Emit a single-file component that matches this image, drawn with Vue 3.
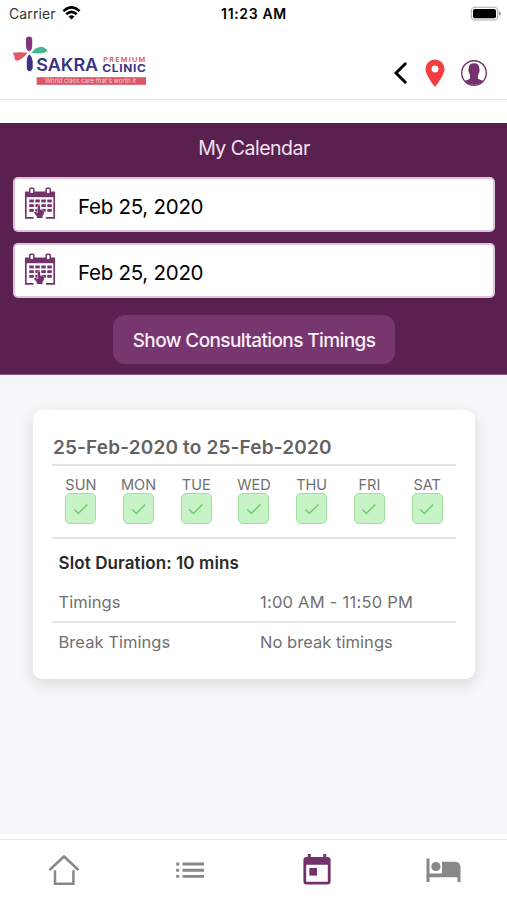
<script setup>
import { ref } from 'vue'

const dates = ref(['Feb 25, 2020', 'Feb 25, 2020'])
const days = ['SUN', 'MON', 'TUE', 'WED', 'THU', 'FRI', 'SAT']
const cells = [0, 1, 2, 3].flatMap((c) => [0, 1, 2].map((r) => ({ x: 5.3 + c * 6, y: 12.5 + r * 4.7 })))
</script>

<template>
  <div class="screen">
    <div class="status">
      <div class="carrier">
        <span>Carrier</span>
        <svg width="19" height="14" viewBox="0 0 18 14">
          <g fill="none" stroke="#000" stroke-width="2.6">
            <path d="M.9 5.1Q9-2.5 17.1 5.1" />
            <path d="M3.8 8.2Q9 3.4 14.2 8.2" />
          </g>
          <path d="M6.1 10.5Q9 8 11.9 10.5L9 13.5Z" />
        </svg>
      </div>
      <div class="clock">11:23 AM</div>
      <svg class="battery" width="32" height="16" viewBox="0 0 32 16">
        <rect x="1.2" y="1.2" width="26.6" height="12.8" rx="3.8" fill="#fff" stroke="#aaa" stroke-width="1.1" />
        <rect x="3" y="3" width="23" height="9.2" rx="2" />
        <path d="M29 5.4Q31 6 31 7.6T29 9.8Z" fill="#999" />
      </svg>
    </div>

    <header class="header">
      <svg class="logo" width="140" height="54" viewBox="10 34 140 54">
        <path d="M29 36.500Q32 36.500 32.200 39V47Q32 50 29.500 51.500Q26 50.500 26 46V39Q26.100 36.500 29 36.500Z" fill="#80377f" />
        <path d="M31.500 52.800Q35 47.500 41 46.800Q45 47 47.800 51Q44 53.500 38 53.600Q34 53.500 31.500 52.800Z" fill="#45b596" />
        <path d="M12.800 52.800Q20 51.800 27.500 52.800Q25.500 56 21.500 58.800Q17 61.800 15.100 60Q14.600 56 12.800 52.800Z" fill="#df5968" />
        <path d="M29.400 54.200Q32.600 57.200 32.700 61V67.500Q32.500 70.800 29.700 71.200Q27 71 26.800 68V60Q27.200 56 29.400 54.200Z" fill="#3b3484" />
        <text class="logo-name" x="36.200" y="71" textLength="62" lengthAdjust="spacingAndGlyphs">SAKRA</text>
        <text class="logo-tier" x="103.300" y="61.800" textLength="43.200" lengthAdjust="spacingAndGlyphs">PREMIUM</text>
        <text class="logo-kind" x="102.300" y="71.500" textLength="44.300" lengthAdjust="spacingAndGlyphs">CLINIC</text>
        <rect x="36.700" y="77.200" width="109.300" height="7.600" fill="#d95867" />
        <text class="logo-tag" x="45" y="83" textLength="91" lengthAdjust="spacingAndGlyphs">World class care that's worth it</text>
      </svg>
      <div class="actions">
        <svg width="16" height="24" viewBox="0 0 16 24">
          <path d="M13.300 2.800 4 12 13.300 21.200" fill="none" stroke="#000" stroke-width="2.900" stroke-linecap="round" />
        </svg>
        <svg width="20" height="28" viewBox="0 0 20 28">
          <path fill="#f23e40" fill-rule="evenodd" d="M10 .5A9.500 9.500 0 0 0 .5 10C.5 16.500 10 27.800 10 27.800S19.500 16.500 19.500 10A9.500 9.500 0 0 0 10 .5ZM10 6.600A3.400 3.400 0 1 1 10 13.400A3.400 3.400 0 1 1 10 6.600Z" />
        </svg>
        <svg width="28" height="28" viewBox="0 0 28 28">
          <circle cx="14" cy="14" r="12.300" fill="#fff" stroke="#73326b" stroke-width="1.400" />
          <path fill="#73326b" d="M14 4.300Q19.400 4.300 19.300 9.500L19.600 11.500Q19.400 14 18.600 14.300Q18.300 16 17.900 17V19.600Q19.500 20.800 23 21.800A12 12 0 0 1 5 21.800Q8.500 20.800 10.100 19.600V17Q9.700 16 9.400 14.300Q8.600 14 8.400 11.500L8.700 9.500Q8.600 4.300 14 4.300Z" />
        </svg>
      </div>
    </header>

    <section class="filters">
      <h1>My Calendar</h1>
      <div v-for="(date, i) in dates" :key="i" class="field">
        <svg width="32" height="33" viewBox="0 0 32 33">
          <path d="M9.500 30.800H1.800V5.500H30.200V30.800H22" fill="none" stroke="#73326b" stroke-width="1.700" />
          <rect x="1" y="4.700" width="30" height="5.500" fill="#73326b" />
          <rect x="5.700" y="1.200" width="4.200" height="5.600" rx="1.200" fill="#fff" stroke="#73326b" stroke-width="1.500" />
          <rect x="22.100" y="1.200" width="4.200" height="5.600" rx="1.200" fill="#fff" stroke="#73326b" stroke-width="1.500" />
          <rect v-for="(c, n) in cells" :key="n" :x="c.x" :y="c.y" width="4.500" height="2.900" fill="#73326b" />
          <path d="M13.700 19.500Q13.700 18.200 14.900 18.200T16.100 19.500V22.600L18.700 23.200Q20.300 23.700 20 25.800Q19.700 28 18.500 29V31H12.800V29.200L10.200 26Q10.500 24.300 12 24.900L13.700 26Z" fill="#73326b" stroke="#fff" stroke-width=".8" paint-order="stroke" />
        </svg>
        <span>{{ date }}</span>
      </div>
      <button class="show">Show Consultations Timings</button>
    </section>

    <main class="content">
      <article class="card">
        <h2>25-Feb-2020 to 25-Feb-2020</h2>
        <div class="days">
          <div v-for="day in days" :key="day" class="day">
            <span>{{ day }}</span>
            <div class="check">
              <svg width="16" height="14" viewBox="0 0 16 14">
                <path d="M1.400 7.600 5.300 11.500 14.400 2.400" fill="none" stroke="#68ce67" stroke-width="1.400" />
              </svg>
            </div>
          </div>
        </div>
        <h3>Slot Duration: 10 mins</h3>
        <div class="row first">
          <span>Timings</span>
          <span class="range">1:00 AM - 11:50 PM</span>
        </div>
        <div class="row">
          <span>Break Timings</span>
          <span>No break timings</span>
        </div>
      </article>
    </main>

    <nav class="tabs">
      <a class="home">
        <svg width="32" height="32" viewBox="0 0 32 32">
          <g fill="none" stroke="#888" stroke-width="2.500">
            <path d="M1.500 16 16 2.500 30.500 16" />
            <path d="M7 16.200V29.700H25.400V16.200" />
          </g>
        </svg>
      </a>
      <a>
        <svg width="30" height="20" viewBox="0 0 30 20">
          <path d="M1.200 4H4.200M7.500 4H29M1.200 10.200H4.200M7.500 10.200H29M1.200 16.400H4.200M7.500 16.400H29" stroke="#888" stroke-width="2.900" />
        </svg>
      </a>
      <a>
        <svg width="28" height="32" viewBox="0 0 28 32">
          <path fill="#73326b" fill-rule="evenodd" d="M4.800 0H7.700V3H20.300V0H23.200V3H24.500Q27.600 3 27.600 6V27.500Q27.600 30.500 24.500 30.500H3.500Q.4 30.500 .4 27.500V6Q.4 3 3.500 3H4.800ZM3.200 10.700V27.800H24.800V10.700Z" />
          <rect x="6.400" y="14" width="7.600" height="7.600" fill="#73326b" />
        </svg>
      </a>
      <a>
        <svg width="36" height="24" viewBox="0 0 36 24">
          <g fill="#888">
            <path d="M.5 .5H3.500V15.500H16V3.700H29Q34.500 4 34.500 9.500V24H31.500V19.200H3.500V24H.5Z" />
            <circle cx="9.900" cy="8.500" r="4.600" />
          </g>
        </svg>
      </a>
    </nav>
  </div>
</template>

<style>
body {
  margin: 0;
}
</style>

<style scoped>
.screen {
  display: flex;
  flex-direction: column;
  width: 507px;
  height: 900px;
  overflow: hidden;
  background: #fff;
  font-family: Inter, "Liberation Sans", sans-serif;
  color: #000;
}
* {
  box-sizing: border-box;
}
svg {
  display: block;
  flex: none;
}
h1, h2, h3 {
  margin: 0;
}
.status {
  display: grid;
  grid-template-columns: 1fr auto 1fr;
  align-items: center;
  height: 28px;
  padding: 0 5px 0 9px;
  font-size: 14px;
  line-height: 28px;
}
.carrier {
  display: flex;
  align-items: center;
  gap: 6px;
  letter-spacing: .1px;
  color: #333;
}
.carrier svg {
  margin-top: -2px;
}
.clock {
  padding-right: 3px;
  font-size: 14px;
  font-weight: 600;
  letter-spacing: .65px;
}
.battery {
  justify-self: end;
  margin-top: -1px;
}
.header {
  display: flex;
  justify-content: space-between;
  height: 72px;
  padding: 6px 19px 0 10px;
  border-bottom: 1px solid #e2e2e2;
}
.logo text {
  font-family: Inter, sans-serif;
}
.logo .logo-name {
  font-size: 17.500px;
  font-weight: 600;
  fill: #3b3484;
}
.logo .logo-tier {
  font-size: 6px;
  font-weight: 600;
  letter-spacing: 1px;
  fill: #d95867;
}
.logo .logo-kind {
  font-size: 10.500px;
  font-weight: 700;
  letter-spacing: .6px;
  fill: #3b3484;
}
.logo .logo-tag {
  font-size: 5.500px;
  fill: #f7d4da;
}
.actions {
  display: flex;
  align-items: center;
  gap: 17px;
  height: 54px;
  padding-top: 24px;
}
.actions svg:nth-child(3) {
  margin-left: -2px;
}
.filters {
  display: flex;
  flex-direction: column;
  align-items: center;
  height: 252px;
  margin-top: 23px;
  padding: 0 12px 0 13px;
  background: #5a2150;
  border-bottom: 1px solid #8a5b83;
}
.filters h1 {
  height: 54px;
  line-height: 50px;
  font-size: 19.500px;
  font-weight: 400;
  letter-spacing: -.5px;
  color: #f0e1ee;
}
.field {
  display: flex;
  align-items: center;
  gap: 22px;
  width: 100%;
  height: 55px;
  margin-bottom: 11px;
  padding: 0 9px;
  border: 2px solid #dfc3dd;
  border-radius: 5px;
  background: #fff;
  font-size: 20.500px;
  letter-spacing: -.27px;
}
.field svg {
  margin-top: -3px;
}
.field span {
  padding-top: 4px;
}
.show {
  width: 282px;
  height: 49px;
  margin-top: 6px;
  padding: 1px 0 0;
  border: 0;
  border-radius: 12px;
  background: #77376e;
  color: #fbeefa;
  font: 500 19px Inter, sans-serif;
  letter-spacing: -.6px;
}
.content {
  height: 459px;
  padding: 35px 32px 0 33px;
  background: #f5f7f9;
}
.card {
  height: 269px;
  padding: 20px 19px 0;
  border-radius: 9px;
  background: #fff;
  box-shadow: 0 5px 15px rgba(0, 0, 0, .12);
  color: #707070;
}
.card h2 {
  height: 36px;
  padding-left: 1px;
  line-height: 36px;
  border-bottom: 2px solid #e3e3e3;
  font-size: 19px;
  font-weight: 600;
  letter-spacing: .16px;
  color: #636363;
}
.days {
  display: grid;
  grid-template-columns: repeat(7, 1fr);
  height: 73px;
  border-bottom: 2px solid #e3e3e3;
}
.day {
  display: flex;
  flex-direction: column;
  align-items: center;
  padding-top: 10px;
  font-size: 14.500px;
  line-height: 18px;
}
.check {
  display: flex;
  align-items: center;
  justify-content: center;
  width: 31px;
  height: 31px;
  margin-top: -1px;
  border: 1.500px solid #a2dda0;
  border-radius: 5px;
  background: #c8f3c6;
}
.card h3 {
  height: 44px;
  padding-left: 6.500px;
  line-height: 48px;
  font-size: 17px;
  font-weight: 600;
  letter-spacing: .1px;
  color: #292929;
}
.row {
  display: grid;
  grid-template-columns: 201.500px 1fr;
  height: 40px;
  padding-left: 6.500px;
  line-height: 39px;
  font-size: 16.500px;
  letter-spacing: .04px;
}
.row .range {
  letter-spacing: .24px;
}
.row.first {
  border-bottom: 2px solid #e5e5e5;
}
.tabs {
  display: grid;
  grid-template-columns: repeat(4, 1fr);
  height: 61px;
  margin-top: 5px;
  border-top: 1px solid #ededed;
}
.tabs a {
  display: flex;
  align-items: center;
  justify-content: center;
}
.tabs .home {
  padding-left: 2px;
}
</style>
